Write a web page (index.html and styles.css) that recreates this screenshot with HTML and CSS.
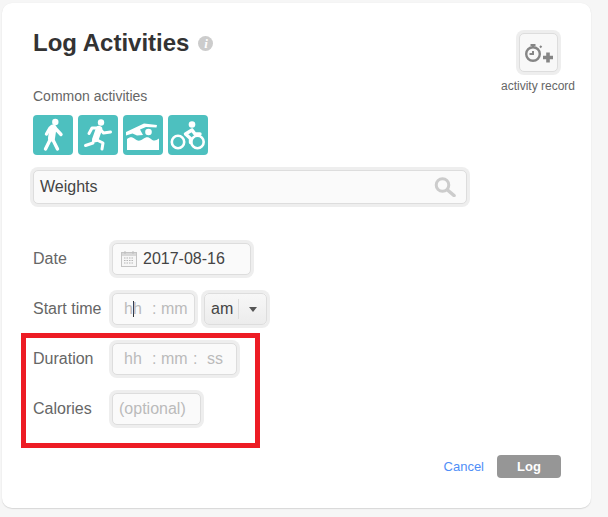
FILE: index.html
```html
<!DOCTYPE html>
<html lang="en">
<head>
<meta charset="utf-8">
<title>Log Activities</title>
<link rel="stylesheet" href="styles.css">
</head>
<body>
<main class="card">
  <div class="top">
    <div class="top-main">
      <div class="title-row">
        <h1 class="title">Log Activities</h1>
        <span class="info">i</span>
      </div>
      <p class="common-label">Common activities</p>
      <div class="tiles">
        <div class="tile">
          <svg viewBox="0 0 40 40" width="40" height="40"><circle cx="22.300" cy="7" r="3.200" fill="#fff"/><path d="M20 13 18.500 23" stroke="#fff" stroke-width="7" stroke-linecap="round" fill="none"/><path d="M17 13 13.500 19M22 13l6 6.500M17.500 24 12.500 34M19.500 24 24.500 34" stroke="#fff" stroke-width="3.400" stroke-linecap="round" stroke-linejoin="round" fill="none"/></svg>
        </div>
        <div class="tile">
          <svg viewBox="0 0 40 40" width="40" height="40"><circle cx="23" cy="7.500" r="3.200" fill="#fff"/><path d="M21 14 17.500 24" stroke="#fff" stroke-width="6.500" stroke-linecap="round" fill="none"/><path d="M20 13h-6l-3 5.500M22 14l3.500 4 7-1M16 24l-1 4-7.500 2.500M18 24.500l7 3.500-1 6" stroke="#fff" stroke-width="3" stroke-linecap="round" stroke-linejoin="round" fill="none"/></svg>
        </div>
        <div class="tile">
          <svg viewBox="0 0 40 40" width="40" height="40"><circle cx="25.500" cy="17" r="3.300" fill="#fff"/><path d="M3 17 21 8.500 34 10 33.500 12.500 23 12 17 14.500 20 20 14 20.500 9.500 18.500 3 20.500Z" fill="#fff"/><path d="M4 24c3-2.500 5-2.500 8 0s5 2 8 0 5-2.500 8 0 5 1.500 8-.5V35H4Z" fill="#fff"/></svg>
        </div>
        <div class="tile">
          <svg viewBox="0 0 40 40" width="40" height="40"><circle cx="24" cy="9.500" r="3.300" fill="#fff"/><circle cx="10" cy="27" r="6.200" fill="none" stroke="#fff" stroke-width="2.600"/><circle cx="29.500" cy="27" r="6.200" fill="none" stroke="#fff" stroke-width="2.600"/><path d="M24 15l-6.500 4 5 4.500v4M24 15l3 4h5" stroke="#fff" stroke-width="3.400" stroke-linecap="round" stroke-linejoin="round" fill="none"/></svg>
        </div>
      </div>
    </div>
    <div class="record">
      <button class="record-btn" type="button" aria-label="activity record">
        <svg viewBox="0 0 39 39" width="39" height="39"><circle cx="14" cy="21" r="6.800" fill="none" stroke="#858585" stroke-width="2.400"/><path d="M11.500 12h5M14 12v2M21 14.500l1.500-1.500M10.500 21H14v-3" stroke="#858585" stroke-width="2" fill="none"/><path d="M29 19.500v10M24 24.500h10" stroke="#858585" stroke-width="3.600" fill="none"/></svg>
      </button>
      <span class="record-label">activity record</span>
    </div>
  </div>

  <div class="field search">
    <span class="value">Weights</span>
    <svg class="search-icon" viewBox="0 0 22 20" width="22" height="20"><circle cx="8.500" cy="8" r="6.300" fill="none" stroke="#cccccc" stroke-width="3"/><path d="M13.500 13 20 18.500" stroke="#cccccc" stroke-width="3.600" stroke-linecap="round"/></svg>
  </div>

  <div class="rows">
    <div class="row">
      <label class="row-label">Date</label>
      <div class="field date">
        <svg class="cal" viewBox="0 0 16 16" width="16" height="16"><rect x="0.500" y="1.500" width="15" height="14" fill="#f6f6f6" stroke="#c4c4c4"/><rect x="1" y="2" width="14" height="3" fill="#d8d8d8"/><path d="M4 0v3M12 0v3" stroke="#bdbdbd"/><path d="M3 7h10M3 9.500h10M3 12h10" stroke="#b5b5b5" stroke-dasharray="1.500 1"/></svg>
        <span class="value">2017-08-16</span>
      </div>
    </div>
    <div class="row">
      <label class="row-label">Start time</label>
      <div class="field time start">
        <span class="seg seg-h">h<span class="caret"></span>h</span>
        <span class="seg seg-c">:</span>
        <span class="seg seg-m">mm</span>
      </div>
      <div class="field ampm">
        <span class="ampm-text">am</span>
        <span class="ampm-arrow"></span>
      </div>
    </div>
    <div class="row">
      <label class="row-label">Duration</label>
      <div class="field time duration">
        <span class="seg seg-h">hh</span>
        <span class="seg seg-c">:</span>
        <span class="seg seg-m">mm</span>
        <span class="seg seg-c2">:</span>
        <span class="seg seg-s">ss</span>
      </div>
    </div>
    <div class="row">
      <label class="row-label">Calories</label>
      <div class="field calories"><span class="seg">(optional)</span></div>
    </div>
  </div>

  <div class="actions">
    <a class="cancel" href="#">Cancel</a>
    <button class="log" type="button">Log</button>
  </div>

  <div class="highlight"></div>
</main>
</body>
</html>
```

FILE: styles.css
```css
* { box-sizing: border-box; }

html, body { margin: 0; padding: 0; }

body {
  width: 608px;
  height: 517px;
  overflow: hidden;
  background: #f6f6f6;
  font-family: "Liberation Sans", Arial, sans-serif;
  padding: 3px 0 0 2px;
}

.card {
  position: relative;
  width: 589px;
  height: 505px;
  background: #fff;
  border-radius: 10px;
  box-shadow: 0 1px 1px #d8d8d8, 0 0 1px #e6e6e6;
  padding: 26px 30px 0 31px;
}

.top { display: flex; justify-content: space-between; }

.title-row { display: flex; align-items: center; height: 28px; }

.title {
  margin: 0;
  font-size: 24px;
  line-height: 28px;
  font-weight: bold;
  color: #333;
}

.info {
  width: 15px;
  height: 15px;
  margin-left: 9px;
  border-radius: 50%;
  background: #ccc;
  color: #fff;
  font: italic bold 13px/15px "Liberation Serif", serif;
  text-align: center;
}

.common-label {
  margin: 29px 0 0;
  font-size: 14px;
  line-height: 20px;
  color: #666;
}

.tiles { display: flex; gap: 5px; margin-top: 9px; }

.tile {
  width: 40px;
  height: 40px;
  border-radius: 4px;
  background: #4dc0bf;
}

.tile svg { display: block; }

.record {
  display: flex;
  flex-direction: column;
  align-items: center;
  width: 76px;
  margin: 4px -15px 0 0;
}

.record-btn {
  width: 39px;
  height: 39px;
  padding: 0;
  border: 1px solid #ddd;
  border-radius: 5px;
  background: #f8f8f8;
  box-shadow: 0 0 0 3px #eee;
}

.record-btn svg { display: block; margin: -1px; }

.record-label {
  margin-top: 7px;
  font-size: 12px;
  line-height: 14px;
  color: #666;
  white-space: nowrap;
}

.field {
  display: flex;
  align-items: center;
  height: 32px;
  border: 1px solid #ddd;
  border-radius: 5px;
  background: #fafafa;
  box-shadow: 0 0 0 3px #eee;
  font-size: 16px;
}

.value { color: #444; }

.search {
  justify-content: space-between;
  width: 434px;
  height: 34px;
  margin-top: 15px;
  padding: 0 10px 0 6px;
}

.search-icon { display: block; }

.rows {
  display: flex;
  flex-direction: column;
  gap: 18px;
  margin-top: 39px;
}

.row { display: flex; align-items: center; height: 32px; }

.row-label {
  width: 79px;
  font-size: 16px;
  color: #666;
}

.date { width: 139px; padding-left: 8px; gap: 6px; }

.cal { display: block; }

.seg { color: #bbb; white-space: nowrap; }

.time { padding-left: 11px; }

.start { width: 83px; }

.duration { width: 125px; }

.seg-h { position: relative; width: 28px; }

.seg-c { width: 9px; }

.seg-m { width: 32px; }

.seg-c2 { width: 14px; }

.caret {
  display: inline-block;
  width: 1px;
  height: 16px;
  margin: 0 -1px 0 0;
  vertical-align: -3px;
  background: #333;
}

.ampm {
  width: 63px;
  margin-left: 9px;
  padding-left: 6px;
  background: linear-gradient(#f7f7f7, #ececec);
  color: #444;
}

.ampm-text {
  width: 28px;
  height: 20px;
  line-height: 20px;
  border-right: 1px solid #ddd;
}

.ampm-arrow {
  width: 0;
  height: 0;
  margin-left: 10px;
  border-left: 4px solid transparent;
  border-right: 4px solid transparent;
  border-top: 5px solid #555;
}

.calories { width: 89px; padding-left: 6px; }

.actions {
  display: flex;
  justify-content: flex-end;
  align-items: center;
  gap: 13px;
  margin-top: 30px;
}

.cancel {
  font-size: 13px;
  color: #4f8ef7;
  text-decoration: none;
}

.log {
  width: 64px;
  height: 23px;
  padding: 0;
  border: 0;
  border-radius: 4px;
  background: #969696;
  color: #fff;
  font: bold 13px "Liberation Sans", Arial, sans-serif;
}

.highlight {
  position: absolute;
  left: 19px;
  top: 330px;
  width: 239px;
  height: 115px;
  border: 5px solid #ed1c24;
}
```
